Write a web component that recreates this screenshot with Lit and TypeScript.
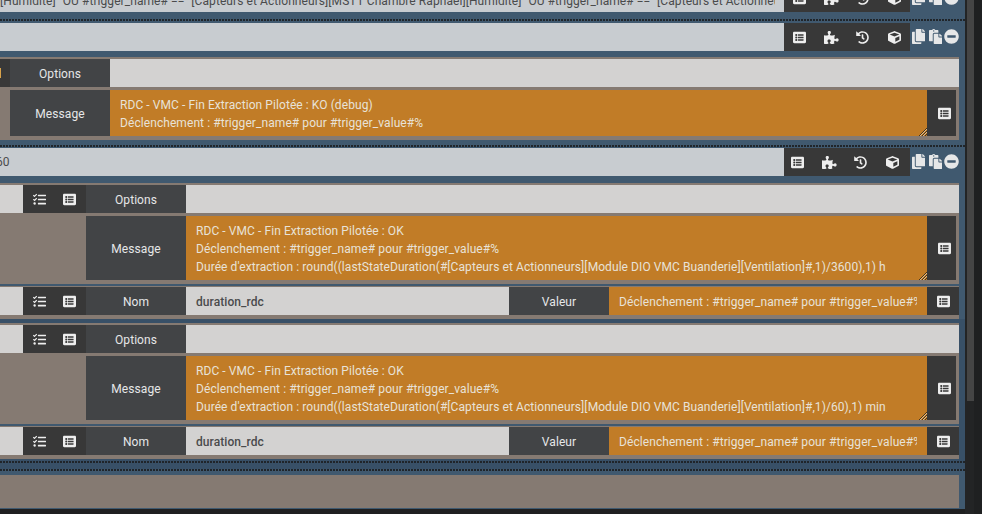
import { LitElement, html, css, svg } from "lit";
import { customElement } from "lit/decorators.js";

const P: Record<string, [number, string]> = {
  list: [512, "M464 480H48c-26.51 0-48-21.49-48-48V80c0-26.51 21.49-48 48-48h416c26.51 0 48 21.49 48 48v352c0 26.51-21.49 48-48 48zM128 120c-22.091 0-40 17.909-40 40s17.909 40 40 40 40-17.909 40-40-17.909-40-40-40zm0 96c-22.091 0-40 17.909-40 40s17.909 40 40 40 40-17.909 40-40-17.909-40-40-40zm0 96c-22.091 0-40 17.909-40 40s17.909 40 40 40 40-17.909 40-40-17.909-40-40-40zm288-136v-32c0-6.627-5.373-12-12-12H204c-6.627 0-12 5.373-12 12v32c0 6.627 5.373 12 12 12h200c6.627 0 12-5.373 12-12zm0 96v-32c0-6.627-5.373-12-12-12H204c-6.627 0-12 5.373-12 12v32c0 6.627 5.373 12 12 12h200c6.627 0 12-5.373 12-12zm0 96v-32c0-6.627-5.373-12-12-12H204c-6.627 0-12 5.373-12 12v32c0 6.627 5.373 12 12 12h200c6.627 0 12-5.373 12-12z"],
  puzzle: [576, "M519.442 288.651c-41.519 0-59.5 31.593-82.058 31.593C377.409 320.244 432 144 432 144s-196.288 80-196.288-3.297c0-35.827 36.288-46.25 36.288-85.985C272 19.216 243.885 0 210.539 0c-34.654 0-66.366 18.891-66.366 56.346 0 41.364 31.711 59.277 31.711 81.75C175.885 207.719 0 166.758 0 166.758v333.237s178.635 41.047 178.635-28.662c0-22.473-40-40.107-40-81.471 0-37.456 29.25-56.346 63.577-56.346 33.673 0 61.788 19.216 61.788 54.717 0 39.735-36.288 50.158-36.288 85.985 0 60.803 129.675 25.73 181.23 25.73 0 0-34.725-120.101 25.827-120.101 35.962 0 46.423 36.152 86.308 36.152C556.712 416 576 387.99 576 354.443c0-34.199-18.962-65.792-56.558-65.792z"],
  history: [512, "M504 255.531c.253 136.64-111.18 248.372-247.82 248.468-59.015.042-113.223-20.53-155.822-54.911-11.077-8.94-11.905-25.541-1.839-35.607l11.267-11.267c8.609-8.609 22.353-9.551 31.891-1.984C173.062 425.135 212.781 440 256 440c101.705 0 184-82.311 184-184 0-101.705-82.311-184-184-184-48.814 0-93.149 18.969-126.068 49.932l50.754 50.754c10.08 10.08 2.941 27.314-11.313 27.314H24c-8.837 0-16-7.163-16-16V38.627c0-14.254 17.234-21.393 27.314-11.314l49.372 49.372C129.209 34.136 189.552 8 256 8c136.81 0 247.747 110.78 248 247.531zm-180.912 78.784l9.823-12.63c8.138-10.463 6.253-25.542-4.21-33.679L288 256.349V152c0-13.255-10.745-24-24-24h-16c-13.255 0-24 10.745-24 24v135.651l65.409 50.874c10.463 8.137 25.541 6.253 33.679-4.21z"],
  cube: [512, "M239.1 6.3l-208 78c-18.7 7-31.1 25-31.1 45v225.1c0 18.2 10.3 34.8 26.5 42.9l208 104c13.5 6.8 29.4 6.8 42.9 0l208-104c16.3-8.1 26.5-24.8 26.5-42.9V129.3c0-20-12.4-37.9-31.1-44.9l-208-78C262 2.2 250 2.2 239.1 6.3zM256 68.4l192 72v1.1l-192 78-192-78v-1.1l192-72zm32 356V275.5l160-65v133.9l-160 80z"],
  copy: [448, "M320 448v40c0 13.255-10.745 24-24 24H24c-13.255 0-24-10.745-24-24V120c0-13.255 10.745-24 24-24h72v296c0 30.879 25.121 56 56 56h168zm0-344V0H152c-13.255 0-24 10.745-24 24v368c0 13.255 10.745 24 24 24h272c13.255 0 24-10.745 24-24V128H344c-13.2 0-24-10.8-24-24zm120.971-31.029L375.029 7.029A24 24 0 0 0 358.059 0H352v96h96v-6.059a24 24 0 0 0-7.029-16.97z"],
  paste: [448, "M128 184c0-30.879 25.122-56 56-56h136V56c0-13.255-10.745-24-24-24h-80.61C204.306 12.89 183.637 0 160 0s-44.306 12.89-55.39 32H24C10.745 32 0 42.745 0 56v336c0 13.255 10.745 24 24 24h104V184zm32-144c13.255 0 24 10.745 24 24s-10.745 24-24 24-24-10.745-24-24 10.745-24 24-24zm184 248h104v200c0 13.255-10.745 24-24 24H184c-13.255 0-24-10.745-24-24V184c0-13.255 10.745-24 24-24h136v104c0 13.2 10.8 24 24 24zm104-38.059V256h-96v-96h6.059a24 24 0 0 1 16.97 7.029l65.941 65.941a24.002 24.002 0 0 1 7.03 16.971z"],
  minus: [512, "M256 8C119 8 8 119 8 256s111 248 248 248 248-111 248-248S393 8 256 8zM124 296c-6.6 0-12-5.4-12-12v-56c0-6.6 5.4-12 12-12h264c6.6 0 12 5.4 12 12v56c0 6.6-5.4 12-12 12H124z"],
  tasks: [512, "M139.61 35.5a12 12 0 0 0-17 0L58.93 98.81l-22.7-22.12a12 12 0 0 0-17 0L3.53 92.41a12 12 0 0 0 0 17l47.59 47.4a12.78 12.78 0 0 0 17.61 0l15.59-15.62L156.52 69a12.09 12.09 0 0 0 .09-17zm0 159.19a12 12 0 0 0-17 0l-63.68 63.72-22.7-22.1a12 12 0 0 0-17 0L3.53 252a12 12 0 0 0 0 17L51 316.5a12.77 12.77 0 0 0 17.6 0l15.7-15.69 72.2-72.22a12 12 0 0 0 .09-16.9zM64 368c-26.49 0-48.59 21.5-48.59 48S37.53 464 64 464a48 48 0 0 0 0-96zm432 16H208a16 16 0 0 0-16 16v32a16 16 0 0 0 16 16h288a16 16 0 0 0 16-16v-32a16 16 0 0 0-16-16zm0-320H208a16 16 0 0 0-16 16v32a16 16 0 0 0 16 16h288a16 16 0 0 0 16-16V80a16 16 0 0 0-16-16zm0 160H208a16 16 0 0 0-16 16v32a16 16 0 0 0 16 16h288a16 16 0 0 0 16-16v-32a16 16 0 0 0-16-16z"],
};

const icon = (n: string) => {
  const [w, d] = P[n];
  return html`<svg class="i" viewBox="0 0 ${w} 512" fill="currentColor">${svg`<path d=${d}></path>`}</svg>`;
};

const TOP_TEXT = `[Humidité]" OU #trigger_name# == "[Capteurs et Actionneurs][MSTT Chambre Raphael][Humidité]" OU #trigger_name# == "[Capteurs et Actionneurs]`;
const M = "Déclenchement : #trigger_name# pour #trigger_value#%";

@customElement("app-root")
export class AppRoot extends LitElement {
  static styles = css`
    :host {
      display: block;
      width: 982px;
      height: 514px;
      overflow: hidden;
      background: #1f2021;
      font-family: Roboto, "Liberation Sans", sans-serif;
      font-size: 12px;
      line-height: 18px;
      letter-spacing: 0.075px;
      color: #d5d5d5;
    }
    .page { display: flex; height: 514px; }
    .main {
      width: 965px;
      flex: none;
      height: 509px;
      background: #40596f;
      display: flex;
      flex-direction: column;
      overflow: hidden;
    }
    .scroll {
      flex: none;
      width: 9px;
      display: flex;
      background: #232425;
      padding-left: 2px;
      box-sizing: border-box;
    }
    .thumb { width: 7px; height: 401px; background: #454545; }
    .dots {
      height: 2px;
      flex: none;
      background: repeating-linear-gradient(90deg, #20252a 0 2px, transparent 2px 3px);
    }
    .d-top { margin: 7px 0 2px; }
    .d-mid { margin: 5px 0 1px; }
    .d-low1 { margin-top: 2px; }
    .d-low2 { margin: 6px 0 0; }
    .bar { display: flex; flex: none; height: 28px; width: 965px; }
    .bar .txt {
      flex: 1;
      min-width: 0;
      background: #c8ccd0;
      color: #4a4b4c;
      line-height: 28px;
      overflow: hidden;
      white-space: pre;
    }
    .first { margin-top: -16px; }
    .first .txt { line-height: 34px; padding-right: 9px; }
    .first .clip { overflow: hidden; }
    .cut span { margin-left: -4px; display: inline-block; }
    .addon { flex: none; width: 126px; background: #383838; color: #eeeeee; display: flex; }
    .addon > span { flex: 1; display: flex; align-items: center; justify-content: center; padding-top: 1px; }
    .side {
      flex: none;
      width: 55px;
      display: flex;
      align-items: center;
      padding: 0 0 2px 2px;
      box-sizing: border-box;
      color: #e6e7e8;
    }
    .side .i { height: 15px; }
    .side .i:nth-child(2) { margin: 0 2.5px 0 3.5px; }
    .i { height: 13px; display: block; flex: none; }
    .box {
      flex: none;
      width: 959px;
      background: #857a72;
      box-sizing: border-box;
      padding: 2px 0 4px;
    }
    .row { display: flex; height: 28px; }
    .gap3 { margin-top: 3px; }
    .lead { flex: none; background: #d3d2d1; width: 23px; }
    .leadb { flex: none; width: 86px; }
    .leadb1 { flex: none; width: 10px; }
    .tool {
      flex: none;
      width: 63px;
      background: #383838;
      color: #eeeeee;
      display: flex;
      align-items: center;
      justify-content: space-around;
      padding: 1px 1px 0;
      box-sizing: border-box;
    }
    .stub { flex: none; width: 10px; background: #383838; display: flex; align-items: center; overflow: hidden; }
    .stub i { display: block; width: 2px; height: 10px; background: #d8a24a; margin-left: -1px; }
    .label {
      flex: none;
      width: 100px;
      background: #424446;
      color: #e6e7e8;
      display: flex;
      align-items: center;
      justify-content: center;
      padding-top: 1px;
      box-sizing: border-box;
    }
    .input {
      background: #d3d2d1;
      color: #4a4b4c;
      padding-left: 10px;
      line-height: 30px;
      min-width: 0;
    }
    .grow { flex: 1; }
    .name { flex: none; width: 323px; box-sizing: border-box; font-weight: 500; }
    .area {
      flex: 1;
      min-width: 0;
      background: #c17c27;
      color: #e8e2d8;
      padding: 6px 10px 0;
      box-sizing: border-box;
      position: relative;
      white-space: nowrap;
      overflow: hidden;
    }
    .area.one { line-height: 30px; padding: 0 10px; flex: none; width: 318px; }
    .one div { overflow: hidden; }
    .grip { position: absolute; right: 0; bottom: 0; width: 9px; height: 9px; display: block; }
    .btn { flex: none; background: #383838; color: #eeeeee; display: flex; align-items: center; justify-content: center; }
    .w29 { width: 29px; margin-right: 3px; padding-left: 6px; box-sizing: border-box; }
    .w32 { width: 32px; }
    .m46 { height: 46px; }
    .m64 { height: 64px; }
    .sep { height: 2px; background: #40596f; flex: none; margin: 4px 0 1px; }
    .lower { flex: none; background: #385067; padding-top: 4px; height: 150px; box-sizing: border-box; }
    .after { height: 6px; flex: none; }
    .after7 { height: 7px; flex: none; }
    .after4 { height: 4px; flex: none; }
    .footer { height: 33px; flex: none; width: 959px; background: #857a72; }
  `;

  private bar(text: unknown, cls = "") {
    return html`<div class="bar ${cls}">
      <div class="txt">${text}</div>
      <div class="addon">
        <span>${icon("list")}</span><span>${icon("puzzle")}</span><span>${icon("history")}</span><span>${icon("cube")}</span>
      </div>
      <div class="side">${icon("copy")}${icon("paste")}${icon("minus")}</div>
    </div>`;
  }

  private grip() {
    return html`<svg class="grip" viewBox="0 0 9 9">${svg`<path d="M1 9 9 1M4 9 9 4M7 9 9 7" stroke="#3a2c1a" stroke-width="0.9" fill="none"></path><path d="M2 9 9 2M5 9 9 5" stroke="#e9d9bd" stroke-width="0.7" fill="none"></path>`}</svg>`;
  }

  private tool() {
    return html`<div class="lead"></div><div class="tool">${icon("tasks")}${icon("list")}</div>`;
  }

  private action(lines: string[]) {
    return html`<div class="box">
      <div class="row">
        ${this.tool()}<div class="label">Options</div><div class="input grow"></div>
      </div>
      <div class="row m64 gap3">
        <div class="leadb"></div>
        <div class="label">Message</div>
        <div class="area">${lines.map((l) => html`<div>${l}</div>`)}${this.grip()}</div>
        <div class="btn w29">${icon("list")}</div>
      </div>
      <div class="sep"></div>
      <div class="row">
        ${this.tool()}<div class="label">Nom</div>
        <div class="input name">duration_rdc</div>
        <div class="label">Valeur</div>
        <div class="area one"><div>${M}</div></div>
        <div class="btn w32">${icon("list")}</div>
      </div>
    </div>`;
  }

  render() {
    return html`<div class="page">
      <div class="main">
        ${this.bar(html`<div class="clip">${TOP_TEXT}</div>`, "first")}
        <div class="dots d-top"></div>
        ${this.bar("")}
        <div class="after"></div>
        <div class="box">
          <div class="row">
            <div class="stub"><i></i></div>
            <div class="label">Options</div>
            <div class="input grow"></div>
          </div>
          <div class="row m46 gap3">
            <div class="leadb1"></div>
            <div class="label">Message</div>
            <div class="area">
              <div>RDC - VMC - Fin Extraction Pilotée : KO (debug)</div>
              <div>${M}</div>
              ${this.grip()}
            </div>
            <div class="btn w29">${icon("list")}</div>
          </div>
        </div>
        <div class="dots d-mid"></div>
        ${this.bar(html`<span>60</span>`, "cut")}
        <div class="after7"></div>
        ${this.action([
          "RDC - VMC - Fin Extraction Pilotée : OK",
          M,
          "Durée d'extraction : round((lastStateDuration(#[Capteurs et Actionneurs][Module DIO VMC Buanderie][Ventilation]#,1)/3600),1) h",
        ])}
        <div class="lower">
          ${this.action([
            "RDC - VMC - Fin Extraction Pilotée : OK",
            M,
            "Durée d'extraction : round((lastStateDuration(#[Capteurs et Actionneurs][Module DIO VMC Buanderie][Ventilation]#,1)/60),1) min",
          ])}
          <div class="dots d-low1"></div>
          <div class="dots d-low2"></div>
        </div>
        <div class="after"></div>
        <div class="footer"></div>
      </div>
      <div class="scroll"><div class="thumb"></div></div>
    </div>`;
  }
}
